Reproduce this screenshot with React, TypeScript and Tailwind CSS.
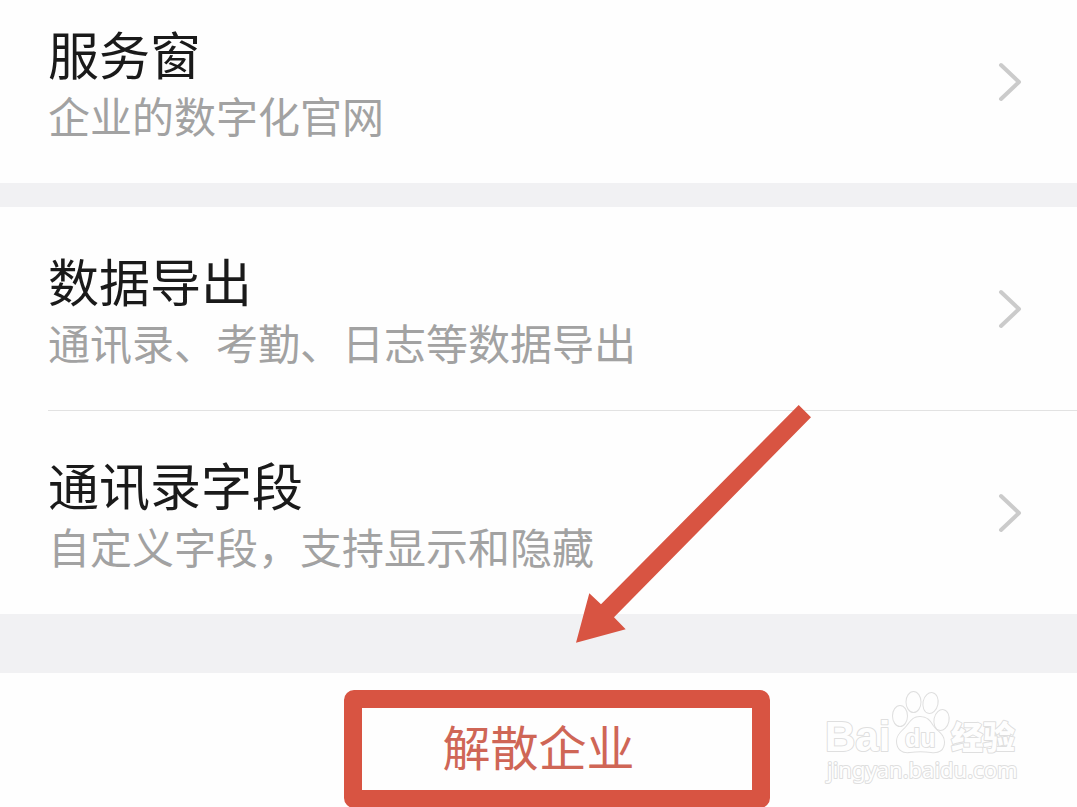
type Setting = {
  title: string;
  description: string;
};

const exportSettings: Array<Setting> = [
  { title: '数据导出', description: '通讯录、考勤、日志等数据导出' },
  { title: '通讯录字段', description: '自定义字段，支持显示和隐藏' },
];

const Chevron = () => (
  <svg
    className="shrink-0"
    width="28"
    height="44"
    viewBox="0 0 28 44"
    fill="none"
    stroke="#cbcbcb"
    strokeWidth="4"
    strokeLinecap="round"
    strokeLinejoin="round"
    aria-hidden="true"
  >
    <path d="M5 5 L23 22 L5 39" />
  </svg>
);

const SettingRow = ({ title, description }: Setting) => (
  <a href="#" className="flex items-center justify-between pr-[53px]">
    <div className="pt-[41px] pb-[38px]">
      <h2 className="text-[51px] leading-[64px] text-[#1a1a1a]">{title}</h2>
      <p className="text-[42px] leading-[60px] text-[#a2a2a2]">
        {description}
      </p>
    </div>
    <Chevron />
  </a>
);

const Arrow = () => (
  <svg
    className="pointer-events-none absolute top-[403px] left-[574px]"
    width="240"
    height="242"
    viewBox="574 403 240 242"
    aria-hidden="true"
  >
    <path
      d="M798.7 405 L811 417.3 L614 617.3 L625.7 629.3 L576 642.7 L589.3 593.3 L601 604.3 Z"
      fill="#d85442"
    />
  </svg>
);

const Watermark = () => (
  <svg
    className="pointer-events-none absolute top-[14px] left-[822px]"
    width="204"
    height="104"
    viewBox="0 0 204 104"
    fill="#fefefe"
    stroke="#dfdfdf"
    strokeWidth="2"
    strokeLinejoin="round"
    paintOrder="stroke"
    role="img"
    aria-label="Baidu 经验"
  >
    <text
      className="font-['Liberation_Sans',sans-serif] font-bold"
      x="3"
      y="64"
      fontSize="42"
    >
      Bai
    </text>
    <ellipse cx="78" cy="29" rx="7" ry="10" />
    <ellipse cx="91.5" cy="15" rx="7" ry="10" />
    <ellipse cx="108.5" cy="16" rx="7" ry="10" transform="rotate(12 108.5 16)" />
    <ellipse cx="119.5" cy="33" rx="7" ry="10" transform="rotate(12 119.5 33)" />
    <path d="M98 30 C105 30 108 34 111 39 C115 45 122 47 122 55 C122 63 117 66 109 65 C102 64 95 64 88 65 C80 66 75 62 75 54 C75 47 81 44 85 39 C89 34 91 30 98 30 Z" />
    <text
      className="font-['Liberation_Sans',sans-serif] font-bold"
      x="83"
      y="60"
      fontSize="25"
    >
      du
    </text>
    <text
      className="font-['Noto_Sans_CJK_SC',sans-serif] font-black"
      x="129"
      y="62"
      fontSize="32"
    >
      经验
    </text>
    <text
      className="font-['Noto_Sans',sans-serif]"
      x="5"
      y="91"
      fontSize="22"
    >
      jingyan.baidu.com
    </text>
  </svg>
);

const App = () => {
  return (
    <main
      lang="zh-CN"
      className="relative min-h-screen overflow-hidden bg-[#fefefe] font-['Noto_Sans_CJK_SC',sans-serif]"
    >
      <section className="-mt-5 pl-12">
        <SettingRow title="服务窗" description="企业的数字化官网" />
      </section>
      <div className="h-6 bg-[#f1f1f3]" />
      <section className="divide-y divide-[#e2e2e2] pl-12">
        {exportSettings.map(setting => (
          <SettingRow key={setting.title} {...setting} />
        ))}
      </section>
      <div className="h-[59px] bg-[#f1f1f3]" />
      <section className="relative overflow-hidden">
        <button
          type="button"
          className="w-full pt-9 pb-[26px] text-center text-[48px] leading-[72px] text-[#cf6656]"
        >
          解散企业
        </button>
        <div className="pointer-events-none absolute top-[17px] left-[344px] h-[118px] w-[426px] rounded-[10px] border-[18px] border-[#d85442]" />
        <Watermark />
      </section>
      <Arrow />
    </main>
  );
};

export default App;
